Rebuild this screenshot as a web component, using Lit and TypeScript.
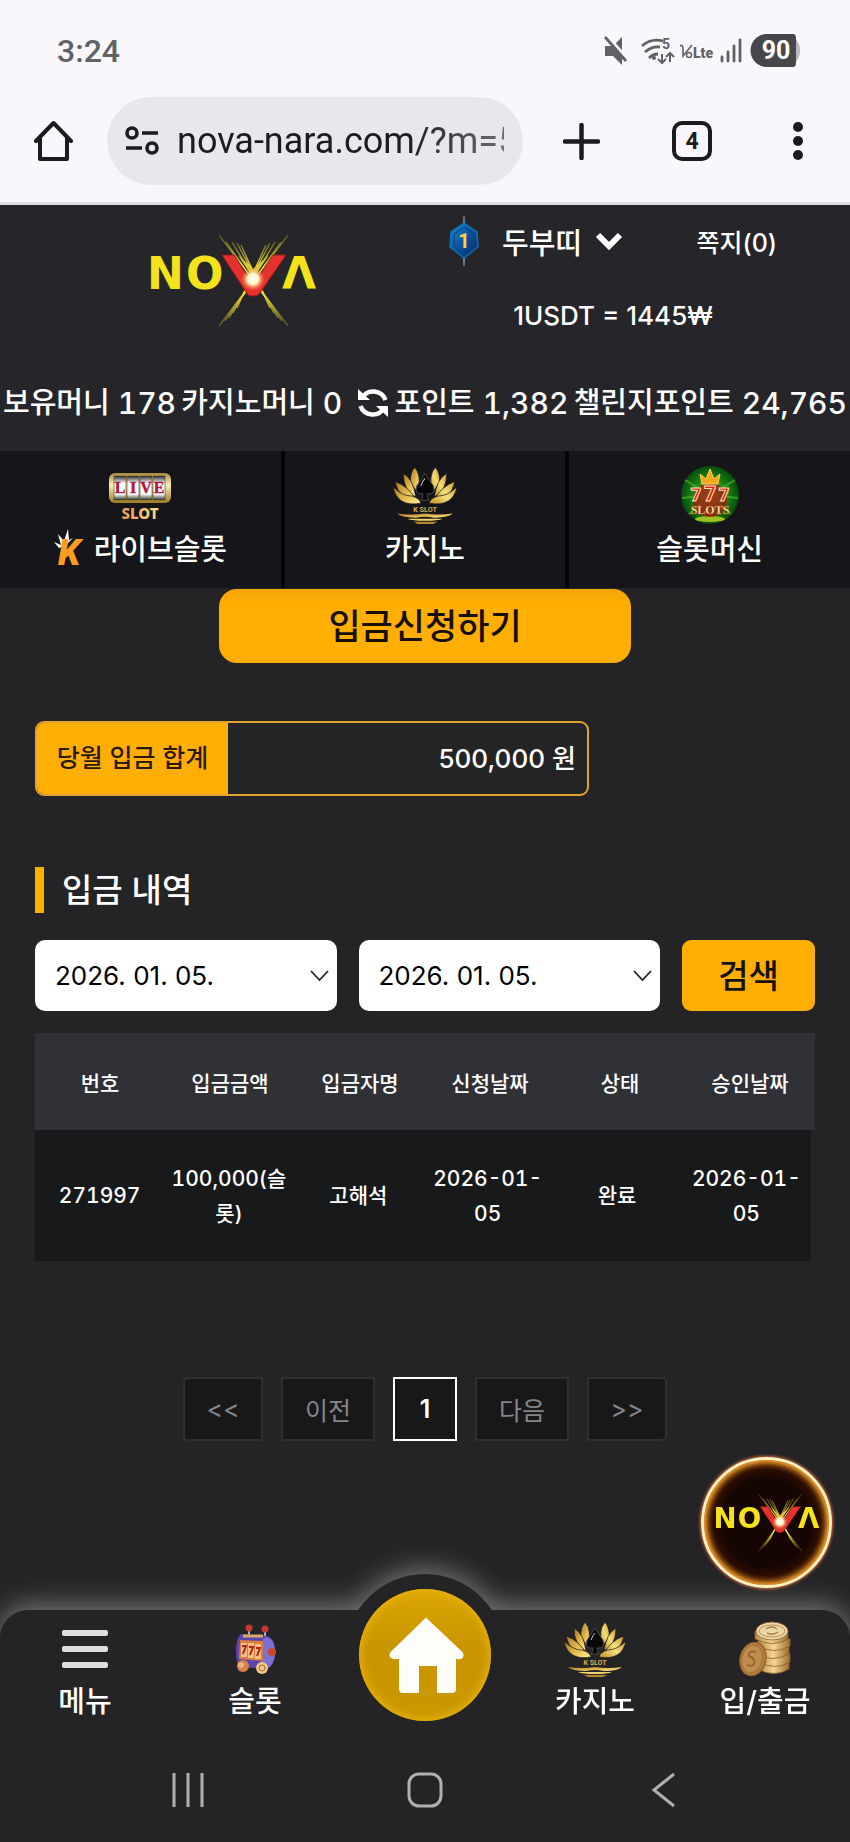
import { LitElement, html, css } from "lit";
import { customElement } from "lit/decorators.js";
import { classMap } from "lit/directives/class-map.js";

/* Shared artwork */

const nova = (cls: string) => html`<svg class=${cls} viewBox="0 0 169 92" role="img" aria-label="NOVA">
  <defs>
    <radialGradient id="flare"><stop offset="0" stop-color="#fff"/><stop offset=".45" stop-color="#fff6c8"/><stop offset="1" stop-color="#ff7a2a" stop-opacity="0"/></radialGradient>
    <linearGradient id="beam" x1="0" y1="0" x2="0" y2="1">
      <stop offset="0" stop-color="#8d8420" stop-opacity=".5"/><stop offset=".35" stop-color="#f2e233"/><stop offset=".65" stop-color="#f2e233"/><stop offset="1" stop-color="#8d8420" stop-opacity=".5"/>
    </linearGradient>
  </defs>
  <g font-family="DejaVu Sans" font-size="44" font-weight="700" fill="#f4e21c">
    <text x="-1" y="54">N</text><text x="38" y="54">O</text><text x="134" y="54">Λ</text>
  </g>
  <g stroke="url(#beam)" stroke-width="1.3">
    <path d="M71 0 L140 91M78 7 L134 86M84 7 L130 83M89 8 L126 78M93 10 L122 73"/>
    <path d="M140 0 L71 91M133 7 L77 86M127 7 L81 83M122 8 L85 78M118 10 L89 73"/>
  </g>
  <path d="M74 20 H86 L105 50 L125 20 H138 L112 58 Q110 61 106 61 H103 Q100 61 98 57Z" fill="#e5322e" stroke="#8e1f16" stroke-width="1"/>
  <path d="M90 20 L105 43 L121 20 L105 34Z" fill="#d8c92e"/>
  <circle cx="105" cy="44" r="12" fill="url(#flare)"/>
</svg>`;

const lotus = (cls: string) => html`<svg class=${cls} viewBox="0 0 62 56" aria-hidden="true">
  <defs>
    <linearGradient id="g1" x1="0" y1="0" x2="1" y2="1"><stop offset="0" stop-color="#a8731d"/><stop offset=".6" stop-color="#e9c355"/><stop offset="1" stop-color="#fff0a0"/></linearGradient>
    <linearGradient id="g2" x1="1" y1="0" x2="0" y2="1"><stop offset="0" stop-color="#c99a2e"/><stop offset=".5" stop-color="#f4df7c"/><stop offset="1" stop-color="#c18a25"/></linearGradient>
  </defs>
  <g fill="url(#g1)" stroke="#16151a" stroke-width=".7">
    <path d="M21 1 Q28 9 24 26 L17 16 Q16 7 21 1Z"/>
    <path d="M10 7 Q20 13 22 30 Q10 24 10 7Z"/>
    <path d="M2 15 Q15 19 23 34 Q6 33 2 15Z"/>
    <path d="M0 20 Q9 29 18 29 Q26 31 27 36 Q4 40 0 20Z"/>
  </g>
  <g fill="url(#g2)" stroke="#16151a" stroke-width=".7">
    <path d="M41 1 Q34 9 38 26 L45 16 Q46 7 41 1Z"/>
    <path d="M52 7 Q42 13 40 30 Q52 24 52 7Z"/>
    <path d="M60 15 Q47 19 39 34 Q56 33 60 15Z"/>
    <path d="M62 20 Q53 29 44 29 Q36 31 35 36 Q58 40 62 20Z"/>
  </g>
  <path d="M31 7 Q35 14 39 19 Q42 28 33 27 Q33 31 35 33 H27 Q29 31 29 27 Q20 28 23 19 Q27 14 31 7Z" fill="#08080a" stroke="#55545b" stroke-width=".8"/>
  <path d="M27 19 Q29 14 31 12" stroke="#c9c9d0" fill="none" stroke-width="1"/>
  <text x="31" y="44" text-anchor="middle" font-family="Roboto" font-size="7" font-weight="700" fill="#d6ae52">K SLOT</text>
  <path d="M4 46 Q18 48 31 46 Q44 48 58 46 Q54 50 40 50 Q31 48 22 50 Q8 50 4 46Z" fill="url(#g1)"/>
  <path d="M14 51 H48 Q44 53 31 53 Q18 53 14 51Z" fill="#efd36c"/>
  <path d="M20 54 H43 L39 56 H24Z" fill="#b98728"/>
</svg>`;

const liveSlot = html`<svg class="tab-icon" viewBox="0 0 64 56" aria-hidden="true">
  <defs>
    <linearGradient id="frame" x1="0" y1="0" x2="0" y2="1"><stop offset="0" stop-color="#a98a3c"/><stop offset=".4" stop-color="#fbeeb4"/><stop offset="1" stop-color="#a27c24"/></linearGradient>
    <linearGradient id="reel" x1="0" y1="0" x2="0" y2="1"><stop offset="0" stop-color="#2b2b2b"/><stop offset=".3" stop-color="#fff"/><stop offset=".75" stop-color="#fff"/><stop offset="1" stop-color="#2f3b2b"/></linearGradient>
    <linearGradient id="word"><stop offset="0" stop-color="#ef9b57"/><stop offset="1" stop-color="#f3de86"/></linearGradient>
  </defs>
  <rect x="1" y="6" width="62" height="30" rx="6" fill="url(#frame)"/>
  <g fill="url(#reel)" stroke="#4b3f22" stroke-width=".6"><rect x="6" y="9" width="12" height="24"/><rect x="19" y="9" width="12" height="24"/><rect x="32" y="9" width="12" height="24"/><rect x="45" y="9" width="12" height="24"/></g>
  <g font-family="Liberation Serif" font-size="16" font-weight="700" fill="#b3153a" stroke="#b3153a" stroke-width=".4" text-anchor="middle">
    <text x="12" y="26">L</text><text x="25" y="26">I</text><text x="38" y="26">V</text><text x="51" y="26">E</text>
  </g>
  <text x="32" y="52" text-anchor="middle" font-family="Noto Sans" font-size="15" font-weight="800" fill="url(#word)">SLOT</text>
</svg>`;

const sevens = html`<svg class="tab-icon" viewBox="0 0 58 58" aria-hidden="true">
  <defs>
    <radialGradient id="green"><stop offset="0" stop-color="#b8e04c"/><stop offset=".55" stop-color="#1e8a16"/><stop offset="1" stop-color="#064d0c"/></radialGradient>
  </defs>
  <circle cx="29" cy="29" r="29" fill="url(#green)"/>
  <path d="M29 29 L4 14M29 29 L1 32M29 29 L8 48M29 29 L54 14M29 29 L57 32M29 29 L50 48" stroke="#56c232" stroke-width="2" opacity=".6"/>
  <ellipse cx="29" cy="53" rx="15" ry="3" fill="#9cc221"/>
  <circle cx="29" cy="34" r="17" fill="#9c1a10" opacity=".8"/>
  <path d="M21 18 L19 8 L25 13 L29 3 L33 13 L39 8 L37 18Z" fill="#f6a51d" stroke="#ffd75c" stroke-width="1"/>
  <g font-family="Roboto" font-weight="900" fill="#e01f1c" stroke="#ffe3a6" stroke-width="1" text-anchor="middle">
    <text x="15" y="35" font-size="18">7</text><text x="43" y="35" font-size="18">7</text><text x="29" y="35" font-size="21">7</text>
  </g>
  <text x="29" y="48" text-anchor="middle" font-family="Liberation Serif" font-size="12" font-weight="700" fill="#fff0b4" stroke="#c2521a" stroke-width=".4">SLOTS</text>
</svg>`;

const crownK = html`<svg class="crown-k" viewBox="0 0 36 44" aria-hidden="true">
  <path d="M0 14 L7 17 L4 6 L10 13 L14 1 L15 12 L19 10 L11 18 L5 20Z" fill="#fff"/>
  <text x="4" y="37" font-family="Roboto" font-size="36" font-weight="900" font-style="italic" fill="#fb9d23">K</text>
</svg>`;

const badge = html`<svg class="level" viewBox="0 0 30 50" role="img" aria-label="레벨 1">
  <defs><linearGradient id="blue" x1="0" y1="0" x2="1" y2="1"><stop offset="0" stop-color="#1c8fd0"/><stop offset=".5" stop-color="#0b53a0"/><stop offset="1" stop-color="#062a63"/></linearGradient></defs>
  <path d="M15 0 L16 10 H14Z M14 40 H16 L15 50Z" fill="#8fa3b0" stroke="#6b7f8c"/>
  <path d="M15 7 L28 16 L29 31 L15 42 L1 31 L2 16Z" fill="url(#blue)" stroke="#0d6fb5" stroke-width="1.5"/>
  <path d="M15 11 L25 18 V30 L15 38 L5 30 V18Z" fill="none" stroke="#083a78"/>
  <text x="15" y="32" text-anchor="middle" font-family="Roboto" font-size="20" font-weight="700" fill="#ffd43c">1</text>
</svg>`;

const slotIcon = html`<svg class="nav-icon" viewBox="0 0 56 56" aria-hidden="true">
  <path d="M22 8 V16M38 9 V18" stroke="#b9a4c9" stroke-width="2"/>
  <circle cx="22" cy="7" r="3.500" fill="#c63a2e"/><circle cx="38" cy="8" r="3.500" fill="#c63a2e"/>
  <path d="M14 13 Q9 16 9 31 Q9 44 14 46 L38 48 Q48 46 48 31 Q48 17 40 15Z" fill="#5d45b0"/>
  <path d="M39 16 Q48 18 48 31 Q48 45 39 48 Q33 44 33 31 Q33 19 39 16Z" fill="#7d70cf"/>
  <path d="M13 19 L36 20 V40 L12 38Z" fill="#d9803f"/>
  <g fill="#f4be84"><rect x="14" y="22" width="6" height="14"/><rect x="21" y="22" width="6" height="15"/><rect x="28" y="23" width="6" height="15"/></g>
  <path d="M15 25 H19 L16 33M22 26 H26 L23 34M29 27 H33 L30 35" fill="none" stroke="#b3261c" stroke-width="2"/>
  <path d="M16 15 H36" stroke="#e0a868" stroke-width="3"/>
  <circle cx="45" cy="31" r="4" fill="#c9472c"/>
  <circle cx="16" cy="45" r="6" fill="#d97f49"/><circle cx="14" cy="44" r="3" fill="#f0b27d"/>
  <circle cx="35" cy="47" r="6" fill="#f1c98a"/><circle cx="35" cy="47" r="3" fill="none" stroke="#a86a2c"/>
</svg>`;

const coinsIcon = html`<svg class="nav-icon" viewBox="0 0 56 56" aria-hidden="true">
  <defs><linearGradient id="coin"><stop offset="0" stop-color="#b98a45"/><stop offset=".5" stop-color="#f3d694"/><stop offset="1" stop-color="#9c6d2e"/></linearGradient></defs>
  <g fill="url(#coin)" stroke="#8a5f2a" stroke-width=".8">
    <path d="M21 41 V48 Q37 57 52 48 V41Z"/><path d="M22 33 V41 Q38 50 53 41 V33Z"/><path d="M20 25 V33 Q36 42 52 33 V25Z"/><path d="M21 18 V25 Q37 34 53 25 V18Z"/><path d="M18 10 V18 Q36 27 51 18 V10Z"/>
    <ellipse cx="35" cy="10" rx="16" ry="9" fill="#edd7a4"/>
  </g>
  <ellipse cx="35" cy="10" rx="13" ry="6" fill="none" stroke="#b8935a"/>
  <path d="M29 8 Q35 4 40 8 M30 12 Q36 15 41 11" stroke="#a67f45" fill="none" stroke-width="1.5"/>
  <ellipse cx="16" cy="38" rx="13" ry="17" transform="rotate(14 16 38)" fill="#b07c3e" stroke="#8a5f2a"/>
  <ellipse cx="15" cy="38" rx="10" ry="14" transform="rotate(14 15 38)" fill="#bf8d4e" stroke="#a87539"/>
  <path d="M19 31 Q11 29 12 35 Q19 38 17 43 Q13 47 10 43" stroke="#99682f" fill="none" stroke-width="2"/>
</svg>`;

const menuIcon = html`<svg class="nav-icon" viewBox="0 0 56 56" aria-hidden="true">
  <g fill="#dedde0"><rect x="5" y="9" width="46" height="6" rx="2"/><rect x="5" y="25" width="46" height="6" rx="2"/><rect x="5" y="41" width="46" height="6" rx="2"/></g>
</svg>`;

@customElement("phone-top")
export class PhoneTop extends LitElement {
  static styles = css`
    :host { display: block; background: #faf7fc; border-bottom: 3px solid #dddbe0; font-family: Roboto, "Noto Sans CJK KR", sans-serif; color: #1c1b20; }
    .status { display: flex; align-items: center; justify-content: space-between; padding: 29px 48px 0 57px; height: 44px; }
    .clock { font-size: 32px; font-weight: 500; color: #626166; }
    .signals { height: 36px; width: 198px; display: block; }
    .bar { display: flex; align-items: center; padding: 24px 38px 17px 34px; }
    button { border: 0; background: none; padding: 0; display: block; }
    button svg { display: block; }
    .pill { flex: 1; min-width: 0; height: 88px; box-sizing: border-box; border-radius: 44px; background: #e9e7ec; margin: 0 40px 0 34px; padding: 0 19px 0 18px; display: flex; align-items: center; gap: 18px; }
    .url { flex: 1; min-width: 0; border: 0; padding: 0; background: none; font: 400 36px/48px Roboto, sans-serif; color: #1c1b20; outline: 0;
      -webkit-mask-image: linear-gradient(90deg, #000 70%, rgba(0, 0, 0, 0.6)); mask-image: linear-gradient(90deg, #000 70%, rgba(0, 0, 0, 0.6)); }
    .actions { display: flex; align-items: center; gap: 71px; }
  `;
  render() {
    return html`
      <div class="status">
        <span class="clock">3:24</span>
        <svg class="signals" viewBox="0 0 198 36" role="img" aria-label="무음, Wi-Fi, VoLTE, 배터리 90">
          <path d="M1 13 H9 L18 4 V32 L9 23 H1Z" fill="#626166"/>
          <path d="M0 0 L24 27" stroke="#faf7fc" stroke-width="4"/>
          <path d="M1 4 L22 28" stroke="#626166" stroke-width="2.8"/>
          <g fill="none" stroke="#626166" stroke-width="2.8">
            <path d="M38 13 Q47 5 59 8M41 19 Q48 13 56 14M45 25 Q49 21 54 21"/>
            <path d="M58 21 V29M54 26 L58 30 L62 26M66 29 V20M62 24 L66 20 L70 24" stroke-width="2"/>
          </g>
          <circle cx="50" cy="25" r="2" fill="#626166"/>
          <text x="58" y="16" font-family="Roboto" font-size="14" font-weight="700" fill="#626166">5</text>
          <path d="M76 13 Q79 11 79 16 L79 23 L88 12" fill="none" stroke="#626166" stroke-width="1.6"/>
          <circle cx="85" cy="22" r="2.5" fill="none" stroke="#626166" stroke-width="1.4"/>
          <text x="89" y="25" font-family="Roboto" font-size="14" font-weight="900" fill="#626166">Lte</text>
          <path d="M118 24 V28M124 19 V28M130 13 V28M136 7 V28" stroke="#626166" stroke-width="2.8" stroke-linecap="round"/>
          <rect x="147" y="1" width="49" height="33" rx="16" fill="#b9b7bc"/>
          <path d="M163 1 H189 Q192 1 192 5 V30 Q192 34 189 34 H163 A16 16 0 0 1 163 1Z" fill="#47464a"/>
          <text x="172" y="26" text-anchor="middle" font-family="Roboto" font-size="25" font-weight="700" fill="#fff">90</text>
        </svg>
      </div>
      <div class="bar">
        <button aria-label="홈">
          <svg width="39" height="42" viewBox="0 0 39 42"><path d="M2 21 L19.500 3 L37 21 M6 18 V39 H33 V18" fill="none" stroke="#1c1b20" stroke-width="4" stroke-linejoin="round" stroke-linecap="round"/></svg>
        </button>
        <div class="pill">
          <svg width="34" height="30" viewBox="0 0 34 30" aria-hidden="true"><g fill="none" stroke="#1c1b20" stroke-width="3.600"><circle cx="7" cy="7" r="5"/><path d="M17 7 H33M1 22 H17"/><circle cx="27" cy="22" r="5"/></g></svg>
          <input class="url" aria-label="주소" value="nova-nara.com/?m=5" />
        </div>
        <div class="actions">
          <button aria-label="새 탭"><svg width="37" height="37" viewBox="0 0 37 37"><path d="M18.500 2 V35M2 18.500 H35" stroke="#1c1b20" stroke-width="4.500" stroke-linecap="round"/></svg></button>
          <button aria-label="탭 4개"><svg width="42" height="42" viewBox="0 0 42 42"><rect x="3" y="3" width="36" height="36" rx="8" fill="none" stroke="#1c1b20" stroke-width="4"/><text x="21" y="29" text-anchor="middle" font-family="Roboto" font-size="23" font-weight="700" fill="#1c1b20">4</text></svg></button>
          <button aria-label="더보기"><svg width="28" height="38" viewBox="0 0 28 38"><g fill="#1c1b20"><circle cx="14" cy="5" r="5"/><circle cx="14" cy="19" r="5"/><circle cx="14" cy="33" r="5"/></g></svg></button>
        </div>
      </div>
    `;
  }
}

@customElement("site-header")
export class SiteHeader extends LitElement {
  static styles = css`
    :host { display: block; background: #26252a; color: #fff; font-weight: 500; }
    button, a { color: inherit; font: inherit; background: none; border: 0; padding: 0; text-decoration: none; }
    .top { display: flex; justify-content: space-between; padding: 12px 73px 0 148px; height: 144px; }
    .logo { display: block; width: 169px; height: 92px; margin-top: 18px; }
    .side { width: 328px; }
    .row { display: flex; align-items: center; justify-content: space-between; height: 48px; }
    .user { display: flex; align-items: center; font-size: 29px; gap: 13px; }
    .level { width: 30px; height: 50px; margin-right: 10px; }
    .note { font-size: 25px; }
    .rate { margin: 34px 0 0; text-align: center; font-size: 26px; line-height: 34px; }
    .money { margin: 0; padding: 18px 3px 24px; display: flex; justify-content: space-between; font-size: 29px; line-height: 48px; white-space: nowrap; }
    .money div { display: flex; align-items: center; gap: 8px; }
    dt, dd { margin: 0; }
    dd { font-size: 30px; font-variant-numeric: tabular-nums; }
    .sync { display: block; margin-left: 7px; }
    .sync svg { display: block; }
    .tabs { display: grid; grid-template-columns: repeat(3, 1fr); gap: 4px; background: #050406; }
    .tab { background: #16151a; height: 122px; padding-top: 15px; display: flex; flex-direction: column; align-items: center; gap: 7px; font-size: 29px; line-height: 38px; }
    .tab-icon { height: 58px; width: 64px; display: block; }
    .label { display: flex; align-items: center; gap: 4px; height: 38px; }
    .crown-k { width: 36px; height: 44px; }
  `;
  render() {
    const sync = html`<svg width="32" height="32" viewBox="0 0 32 32" aria-hidden="true">
      <path d="M5 11 A13 13 0 0 1 28.500 13M27 21 A13 13 0 0 1 3.500 19" fill="none" stroke="#fff" stroke-width="4.500"/>
      <path d="M1 2 L13 13 H1Z M31 30 L19 19 H31Z" fill="#fff"/></svg>`;
    return html`
      <div class="top">
        <a href="#" aria-label="NOVA">${nova("logo")}</a>
        <div class="side">
          <div class="row">
            <button class="user">${badge}두부띠
              <svg width="28" height="18" viewBox="0 0 28 18" aria-hidden="true"><path d="M3 3 L14 14 L25 3" fill="none" stroke="#fff" stroke-width="6"/></svg>
            </button>
            <a class="note" href="#">쪽지(0)</a>
          </div>
          <p class="rate">1USDT = 1445₩</p>
        </div>
      </div>
      <dl class="money">
        <div><dt>보유머니</dt><dd>178</dd></div>
        <div><dt>카지노머니</dt><dd>0</dd><dd><button class="sync" aria-label="새로고침">${sync}</button></dd></div>
        <div><dt>포인트</dt><dd>1,382</dd></div>
        <div><dt>챌린지포인트</dt><dd>24,765</dd></div>
      </dl>
      <nav class="tabs">
        <a class="tab" href="#">${liveSlot}<span class="label">${crownK}라이브슬롯</span></a>
        <a class="tab" href="#">${lotus("tab-icon")}<span class="label">카지노</span></a>
        <a class="tab" href="#">${sevens}<span class="label">슬롯머신</span></a>
      </nav>
    `;
  }
}

@customElement("deposit-page")
export class DepositPage extends LitElement {
  static styles = css`
    :host { display: block; padding: 1px 35px 0; color: #fff; }
    button, select { font-family: inherit; }
    .apply { display: block; width: 412px; height: 74px; margin: 0 auto; border: 0; border-radius: 18px; background: linear-gradient(#f5a506, #ffae03 16px); color: #17100a; font-size: 35px; font-weight: 500; padding: 0 0 5px; }
    .sum { display: flex; width: 71%; height: 75px; box-sizing: border-box; margin: 58px 0 0; border: 2px solid #e0a42c; border-radius: 9px; overflow: hidden; line-height: 71px; }
    .sum dt { width: 191px; background: #ffae03; color: #2a1a08; text-align: center; font-size: 25px; font-weight: 500; }
    .sum dd { margin: 0; flex: 1; text-align: right; padding-right: 11px; font-size: 26px; font-weight: 500; }
    h2 { margin: 71px 0 0; border-left: 9px solid #ffae03; padding-left: 18px; font-size: 33px; line-height: 46px; font-weight: 500; }
    .search { display: grid; grid-template-columns: 1fr 1fr 133px; gap: 22px; margin-top: 27px; }
    .pick { position: relative; display: block; }
    .pick svg { position: absolute; right: 8px; top: 29px; pointer-events: none; }
    select { appearance: none; width: 100%; height: 71px; border: 0; border-radius: 10px; background: #fff; color: #000; padding: 0 20px; font-size: 26px; display: block; }
    .go { border: 0; border-radius: 9px; background: #ffae03; color: #17100a; font-size: 33px; font-weight: 500; padding: 0 0 3px; }
    table { display: block; margin-top: 22px; text-align: center; }
    thead, tbody { display: block; }
    tr { display: grid; grid-template-columns: repeat(6, 1fr); align-items: center; }
    th, td { padding: 0 5px; font-weight: 500; }
    thead tr { height: 97px; background: #2f3137; font-size: 21px; }
    tbody tr { height: 131px; margin-right: 4px; background: #18191a; font-size: 21px; line-height: 35px; }
    .num { font-variant-numeric: tabular-nums; }
    .pages { display: flex; justify-content: center; gap: 18px; margin-top: 116px; padding-bottom: 167px; }
    .page { height: 64px; padding: 0 22px; border: 2px solid #2f2f32; background: #18181a; color: #858589; font-size: 25px; font-weight: 400; }
    .edge { width: 80px; padding: 0; }
    .first { border-radius: 5px 0 0 5px; }
    .last { border-radius: 0 5px 5px 0; }
    .current { width: 64px; padding: 0; border-color: #fff; color: #fff; font-weight: 600; }
  `;
  private row = ["271997", "100,000(슬롯)", "고해석", "2026-01-05", "완료", "2026-01-05"];
  private heads = ["번호", "입금금액", "입금자명", "신청날짜", "상태", "승인날짜"];
  private pages = ["<<", "이전", "1", "다음", ">>"];
  private pick(name: string) {
    return html`<label class="pick">
      <select aria-label=${name}><option>2026. 01. 05.</option></select>
      <svg width="19" height="13" viewBox="0 0 19 13" aria-hidden="true"><path d="M1 2 L9.500 11 L18 2" fill="none" stroke="#222" stroke-width="1.800"/></svg>
    </label>`;
  }
  render() {
    return html`
      <button class="apply">입금신청하기</button>
      <dl class="sum"><dt>당월 입금 합계</dt><dd>500,000 원</dd></dl>
      <h2>입금 내역</h2>
      <form class="search" @submit=${(e: Event) => e.preventDefault()}>
        ${this.pick("시작일")}${this.pick("종료일")}
        <button class="go">검색</button>
      </form>
      <table>
        <thead><tr>${this.heads.map((h) => html`<th scope="col">${h}</th>`)}</tr></thead>
        <tbody><tr>${this.row.map((c) => html`<td class=${classMap({ num: /^\d/.test(c) })}>${c}</td>`)}</tr></tbody>
      </table>
      <nav class="pages" aria-label="페이지">
        ${this.pages.map((p, i) => html`<button class=${classMap({ page: true, edge: i === 0 || i === 4, first: i === 0, last: i === 4, current: i === 2 })}>${p}</button>`)}
      </nav>
    `;
  }
}

@customElement("bottom-nav")
export class BottomNav extends LitElement {
  static styles = css`
    :host { display: block; position: relative; color: #fff; filter: drop-shadow(0 -4px 14px rgba(255, 255, 255, 0.4)); }
    a { color: inherit; text-decoration: none; }
    .hump { position: absolute; top: -36px; left: 50%; margin-left: -80px; width: 160px; height: 160px; border-radius: 50%; background: #242426; }
    .home { position: absolute; top: -21px; left: 50%; margin-left: -66px; width: 132px; height: 132px; border-radius: 50%; background: linear-gradient(#dca604, #c99500 45%, #cc9800); box-shadow: inset 0 0 8px 2px #eab308; }
    .home svg { display: block; }
    .bar { background: #242426; border-radius: 28px 28px 0 0; }
    .items { display: grid; grid-template-columns: repeat(5, 1fr); padding-top: 11px; }
    .item { display: flex; flex-direction: column; align-items: center; gap: 7px; font-size: 29px; line-height: 36px; font-weight: 500; }
    .nav-icon { display: block; height: 56px; width: 62px; }
    .system { display: flex; justify-content: space-between; padding: 52px 171px 34px; }
    button { background: none; border: 0; padding: 0; }
    button svg { display: block; }
  `;
  render() {
    return html`
      <div class="hump"></div>
      <div class="bar">
        <nav class="items">
          <a class="item" href="#">${menuIcon}메뉴</a>
          <a class="item" href="#">${slotIcon}슬롯</a>
          <span></span>
          <a class="item" href="#">${lotus("nav-icon")}카지노</a>
          <a class="item" href="#">${coinsIcon}입/출금</a>
        </nav>
        <div class="system">
          <button aria-label="최근 앱"><svg width="34" height="36" viewBox="0 0 34 36"><path d="M3 1 V35M17 1 V35M31 1 V35" stroke="#b0afb2" stroke-width="3"/></svg></button>
          <button aria-label="홈 화면"><svg width="36" height="36" viewBox="0 0 36 36"><rect x="2" y="2" width="32" height="32" rx="10" fill="none" stroke="#b0afb2" stroke-width="3"/></svg></button>
          <button aria-label="뒤로"><svg width="34" height="36" viewBox="0 0 34 36"><path d="M29 2 L9 18 L29 34" fill="none" stroke="#b0afb2" stroke-width="3"/></svg></button>
        </div>
      </div>
      <a class="home" href="#" aria-label="홈">
        <svg width="132" height="132" viewBox="0 0 132 132"><path d="M67 30 L103 64 Q105 70 98 69 H96 V100 Q96 103 93 103 H79 V76 H59 V103 H44 Q41 103 41 100 V69 H38 Q30 70 32 64Z" fill="#fffdfa" stroke="#fffdfa" stroke-width="2" stroke-linejoin="round"/></svg>
      </a>
    `;
  }
}

@customElement("app-root")
export class AppRoot extends LitElement {
  static styles = css`
    :host { display: flex; flex-direction: column; min-height: 100vh; background: #242426; overflow: hidden; font-family: Inter, "Noto Sans CJK KR", sans-serif; }
    .content { flex: 1; position: relative; }
    .floating { position: absolute; z-index: 2; right: 18px; bottom: 22px; width: 131px; height: 131px; box-sizing: border-box; padding: 0; border-radius: 50%; border: 3px solid #fff0c0; background: radial-gradient(circle, #160603 50%, #2b0d02 60%, #8a4a08 70%);
      box-shadow: inset 0 0 5px 2px #ffab35, 0 0 3px 1px #d96c35; display: flex; align-items: center; justify-content: center; }
    .mark { width: 106px; height: 58px; display: block; }
  `;
  render() {
    return html`
      <phone-top></phone-top>
      <site-header></site-header>
      <main class="content">
        <deposit-page></deposit-page>
        <button class="floating" aria-label="NOVA 상담">${nova("mark")}</button>
      </main>
      <bottom-nav></bottom-nav>
    `;
  }
}
